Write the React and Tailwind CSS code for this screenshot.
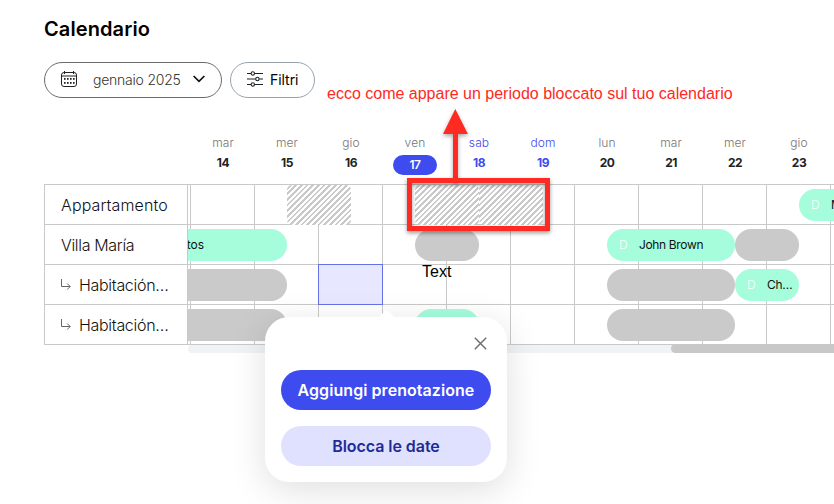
import React from "react";

const DAYS = [
  { name: "mar", number: 14 },
  { name: "mer", number: 15 },
  { name: "gio", number: 16 },
  { name: "ven", number: 17, today: true },
  { name: "sab", number: 18, weekend: true },
  { name: "dom", number: 19, weekend: true },
  { name: "lun", number: 20 },
  { name: "mar", number: 21 },
  { name: "mer", number: 22 },
  { name: "gio", number: 23 },
];

// "start" is the distance in px from the left edge of the scrolled area, "span" is in days.
const ROWS = [
  {
    label: "Appartamento",
    tracking: "tracking-[0.12px]",
    events: [
      { type: "blocked", start: 99, span: 1 },
      { type: "blocked", start: 227, span: 1 },
      { type: "blocked", start: 291, span: 1 },
      { type: "booking", start: 611, span: 2, guest: "Maria", source: "D" },
    ],
  },
  {
    label: "Villa María",
    tracking: "tracking-[-0.33px]",
    events: [
      { type: "booking", start: -93, span: 3, tail: "tos" },
      { type: "busy", start: 227, span: 1 },
      { type: "booking", start: 419, span: 2, guest: "John Brown", source: "D" },
      { type: "busy", start: 547, span: 1 },
    ],
  },
  {
    label: "Habitación…",
    child: true,
    tracking: "tracking-[-0.3px]",
    selected: 2,
    events: [
      { type: "busy", start: -93, span: 3 },
      { type: "busy", start: 419, span: 2 },
      { type: "booking", start: 547, span: 1, guest: "Ch…", source: "D" },
    ],
  },
  {
    label: "Habitación…",
    child: true,
    tracking: "tracking-[-0.3px]",
    events: [
      { type: "busy", start: -93, span: 3 },
      { type: "booking", start: 227, span: 1 },
      { type: "busy", start: 419, span: 2 },
    ],
  },
];

function CalendarIcon() {
  return (
    <svg className="shrink-0" width="16" height="17" viewBox="0 0 16 17" fill="none" stroke="#222" strokeWidth="1">
      <rect x="0.5" y="1.5" width="15" height="14" rx="2.5" />
      <path d="M0.5 5h15M3.5 0v3M12.5 0v3" />
      <g fill="#222" stroke="none">
        <rect x="6" y="7" width="1.6" height="1.8" />
        <rect x="9" y="7" width="1.6" height="1.8" />
        <rect x="12" y="7" width="1.6" height="1.8" />
        <rect x="3" y="7" width="1.6" height="1.8" />
        <rect x="3" y="11" width="1.6" height="1.8" />
        <rect x="6" y="11" width="1.6" height="1.8" />
        <rect x="9" y="11" width="1.6" height="1.8" />
        <rect x="12" y="11" width="1.6" height="1.8" />
      </g>
    </svg>
  );
}

function FilterIcon() {
  return (
    <svg className="shrink-0" width="16" height="16" viewBox="0 0 16 16" fill="none" stroke="#222" strokeWidth="1.1">
      <path d="M0 2.5h4M7.6 2.5H16M0 8h8.6M12.2 8H16M0 13.5h4M7.6 13.5H16" />
      <circle cx="5.8" cy="2.5" r="1.7" />
      <circle cx="10.4" cy="8" r="1.7" />
      <circle cx="5.8" cy="13.5" r="1.7" />
    </svg>
  );
}

function Toolbar() {
  return (
    <div className="mt-[19px] flex gap-2">
      <button className="flex h-9 w-[178px] items-center rounded-full border border-[#6b6b6b] pb-0.5 pl-4 text-[14px] text-[#333]">
        <CalendarIcon />
        <span className="ml-4 w-[88px] whitespace-nowrap text-left font-light tracking-[-0.23px]">gennaio 2025</span>
        <svg className="ml-3" width="12" height="8" viewBox="0 0 12 8" fill="none" stroke="#111" strokeWidth="1.7">
          <path d="M0.6 1l5.4 5.3L11.4 1" />
        </svg>
      </button>
      <button className="flex h-9 w-[85px] items-center gap-[7px] rounded-full border border-[#98a2ad] pb-0.5 pl-4 text-[14px] text-black">
        <FilterIcon />
        <span className="tracking-[-0.05px]">Filtri</span>
      </button>
    </div>
  );
}

function DayHeader({ day }) {
  const nameColor = day.weekend ? "text-[#3d4bef]" : "text-[#757575]";
  const numberColor = day.weekend ? "text-[#3d4bef]" : "text-[#222]";
  return (
    <div className="flex w-16 shrink-0 flex-col items-center">
      <span className={`text-[12px] font-light leading-4 tracking-[0.1px] ${nameColor}`}>{day.name}</span>
      {day.today ? (
        <span className="mt-1 flex h-5 w-11 items-center justify-center rounded-full bg-[#3d4bef] text-[12px] font-semibold tracking-[-0.4px] text-white">
          {day.number}
        </span>
      ) : (
        <span className={`mt-1 text-[12px] font-bold leading-4 tracking-[-0.5px] ${numberColor}`}>{day.number}</span>
      )}
    </div>
  );
}

function Event({ event }) {
  const place = { left: event.start, width: event.span * 64 };
  if (event.type === "blocked") {
    return (
      <div
        className="absolute top-0 h-10 rounded-[5px] bg-[repeating-linear-gradient(-45deg,#fff_0_2px,#c9c9c9_2px_4px)]"
        style={place}
      />
    );
  }
  if (event.type === "busy") {
    return <div className="absolute top-1 h-8 rounded-full bg-[#cacaca]" style={place} />;
  }
  return (
    <div
      className="absolute top-1 flex h-8 items-center overflow-hidden whitespace-nowrap rounded-full bg-[#a5fddc] pl-3 text-[12px] text-[#111]"
      style={place}
    >
      {event.source && <span className="w-5 shrink-0 font-light text-white">{event.source}</span>}
      {event.guest && <span className="tracking-[-0.35px]">{event.guest}</span>}
      {event.tail && <span className="ml-auto mr-[83px]">{event.tail}</span>}
    </div>
  );
}

function Popover() {
  return (
    <div className="absolute left-[265px] top-[317px] flex h-[165px] w-[242px] flex-col rounded-[24px] bg-white px-4 shadow-[0_8px_36px_rgba(0,0,0,0.13)]">
      <svg className="absolute left-[113px] top-[-7px]" width="17" height="8" viewBox="0 0 17 8">
        <path d="M0 8L7.300 0.800Q8.500 -0.200 9.700 0.800L17 8z" fill="#fff" />
      </svg>
      <svg className="ml-auto mr-1 mt-5 shrink-0" width="13" height="13" viewBox="0 0 13 13" stroke="#6b6b6b" strokeWidth="1.4">
        <path d="M0.8 0.8l11.4 11.4M12.2 0.8L0.8 12.2" />
      </svg>
      <button className="mt-5 h-10 shrink-0 whitespace-nowrap rounded-full bg-[#3d4bef] text-[16px] font-semibold tracking-[0.06px] text-white">
        Aggiungi prenotazione
      </button>
      <button className="mt-4 h-10 shrink-0 rounded-full bg-[#dfe1ff] text-[16px] font-semibold tracking-[-0.05px] text-[#1d2b96]">
        Blocca le date
      </button>
    </div>
  );
}

function Annotations() {
  return (
    <>
      <p className="absolute left-[327px] top-[84px] whitespace-nowrap font-['Liberation_Sans',Arial,sans-serif] text-[16px] leading-5 text-[#ff2a21]">
        ecco come appare un periodo bloccato sul tuo calendario
      </p>
      <svg
        className="absolute left-[440px] top-[106px] drop-shadow-[0_2px_2px_rgba(0,0,0,0.35)]"
        width="32"
        height="76"
        viewBox="0 0 32 76"
      >
        <path d="M15.3 3l12.6 25H18V76h-5V28H3z" fill="#ff2a21" />
      </svg>
      <div className="absolute left-[407px] top-[178px] h-[53px] w-[143px] border-[5px] border-[#ff2a21] drop-shadow-[0_2px_2px_rgba(0,0,0,0.4)]" />
      <p className="absolute left-[422px] top-[262px] font-['Liberation_Sans',Arial,sans-serif] text-[16px] leading-5 text-black">
        Text
      </p>
    </>
  );
}

export default function App() {
  return (
    <div className="relative h-[504px] w-[834px] overflow-hidden bg-white pl-11 pt-[15px] font-['Inter',sans-serif]">
      <h1 className="text-[20px] font-semibold leading-7 tracking-[0.1px] text-black">Calendario</h1>
      <Toolbar />

      <div className="mt-[37px] flex">
        <div className="mt-[49px] w-36 shrink-0 self-start border-x border-t border-[#c9c9c9]">
          {ROWS.map((row, i) => (
            <div key={i} className="flex h-10 items-center border-b border-[#c9c9c9] pl-4 text-[16px] text-[#111]">
              {row.child && (
                <svg className="mr-2 shrink-0" width="10" height="11" viewBox="0 0 10 11" fill="none" stroke="#666" strokeWidth="1">
                  <path d="M0.5 0v7.500H9M6.200 4.500L9.200 7.500l-3 3" />
                </svg>
              )}
              <span className={`whitespace-nowrap font-light ${row.tracking}`}>{row.label}</span>
            </div>
          ))}
        </div>

        <div className="min-w-0 flex-1 overflow-hidden">
          <div className="flex h-[49px] pl-[3px]">
            {DAYS.map((day) => (
              <DayHeader key={day.number} day={day} />
            ))}
          </div>
          <div className="border-t border-[#c9c9c9]">
            {ROWS.map((row, i) => (
              <div key={i} className="relative flex h-10">
                <div className="w-[3px] shrink-0 border-b border-r border-[#c9c9c9]" />
                {DAYS.map((day, d) => (
                  <div key={day.number} className="relative w-16 shrink-0 border-b border-r border-[#c9c9c9]">
                    {row.selected === d && (
                      <div className="absolute -left-px -top-px h-[41px] w-[65px] border border-[#6571e6] bg-[#e7e8ff]" />
                    )}
                  </div>
                ))}
                <div className="flex-1 border-b border-[#c9c9c9]" />
                {row.events.map((event, e) => (
                  <Event key={e} event={event} />
                ))}
              </div>
            ))}
          </div>
          <div className="flex h-2 rounded-l-full bg-[#eff3f5]">
            <div className="-mt-px ml-auto h-[9px] w-[163px] rounded-l-full bg-[#c8c8c8]" />
          </div>
        </div>
      </div>

      <Popover />
      <Annotations />
    </div>
  );
}
